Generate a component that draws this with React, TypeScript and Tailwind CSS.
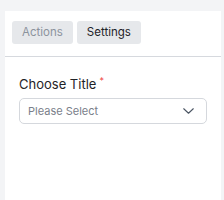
import React from 'react';

const TABS = ['Actions', 'Settings'];

export default function App() {
  const active = 'Settings';

  return (
    <div className="w-[224px] h-[200px] bg-[#f3f4f6] pl-[5px] pt-[11px] pr-[3px] font-['Inter',sans-serif]">
      <div className="bg-white h-full">
        {/* Tabs */}
        <div className="flex gap-1 px-[7px] pt-[10px] pb-[12px] border-b border-[#d6d9de]">
          {TABS.map(tab => (
            <button
              key={tab}
              className={`h-[23px] px-[10px] rounded-[3px] bg-[#e6e8eb] text-[11.5px] leading-[23px] ${
                tab === active ? 'text-[#1f2328]' : 'text-[#8c939d]'
              }`}
            >
              {tab}
            </button>
          ))}
        </div>

        {/* Form */}
        <div className="px-[14px] pt-[18px]">
          <label className="block text-[13px] leading-[18px] text-[#1f2328]">
            Choose Title
            <span className="relative -top-[5px] ml-[3px] text-[9px] leading-none text-[#ef4444]">*</span>
          </label>
          <div className="mt-[5px] h-[26px] flex items-center justify-between border border-[#d5d8dd] rounded-[5px] pl-[8px] pr-[12px]">
            <span className="text-[11px] text-[#7a808a]">Please Select</span>
            <svg width="11" height="6" viewBox="0 0 11 6" fill="none">
              <path d="M0.75 0.75l4.75 4.5 4.75-4.5" stroke="#4b5563" strokeWidth="1.1" strokeLinecap="round" strokeLinejoin="round" />
            </svg>
          </div>
        </div>
      </div>
    </div>
  );
}
